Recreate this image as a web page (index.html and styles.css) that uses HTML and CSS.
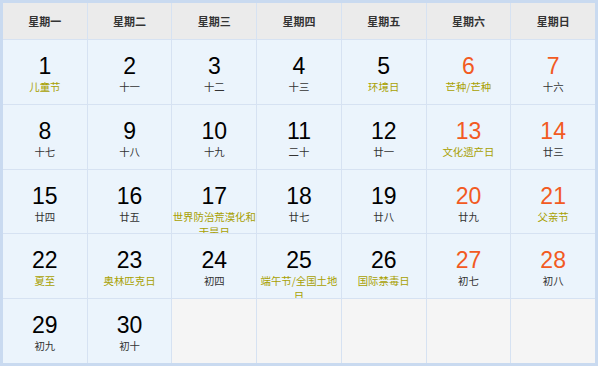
FILE: index.html
```html
<!DOCTYPE html>
<html lang="zh">
<head>
<meta charset="utf-8">
<link rel="stylesheet" href="styles.css">
</head>
<body>
<div class="cal">
  <div class="hd">星期一</div><div class="hd">星期二</div><div class="hd">星期三</div><div class="hd">星期四</div><div class="hd">星期五</div><div class="hd">星期六</div><div class="hd">星期日</div>

  <div class="day"><div class="n">1</div><div class="l fest">儿童节</div></div>
  <div class="day"><div class="n">2</div><div class="l">十一</div></div>
  <div class="day"><div class="n">3</div><div class="l">十二</div></div>
  <div class="day"><div class="n">4</div><div class="l">十三</div></div>
  <div class="day"><div class="n">5</div><div class="l fest">环境日</div></div>
  <div class="day wk"><div class="n">6</div><div class="l fest">芒种/芒种</div></div>
  <div class="day wk"><div class="n">7</div><div class="l">十六</div></div>

  <div class="day"><div class="n">8</div><div class="l">十七</div></div>
  <div class="day"><div class="n">9</div><div class="l">十八</div></div>
  <div class="day"><div class="n">10</div><div class="l">十九</div></div>
  <div class="day"><div class="n">11</div><div class="l">二十</div></div>
  <div class="day"><div class="n">12</div><div class="l">廿一</div></div>
  <div class="day wk"><div class="n">13</div><div class="l fest">文化遗产日</div></div>
  <div class="day wk"><div class="n">14</div><div class="l">廿三</div></div>

  <div class="day"><div class="n">15</div><div class="l">廿四</div></div>
  <div class="day"><div class="n">16</div><div class="l">廿五</div></div>
  <div class="day"><div class="n">17</div><div class="l fest">世界防治荒漠化和干旱日</div></div>
  <div class="day"><div class="n">18</div><div class="l">廿七</div></div>
  <div class="day"><div class="n">19</div><div class="l">廿八</div></div>
  <div class="day wk"><div class="n">20</div><div class="l">廿九</div></div>
  <div class="day wk"><div class="n">21</div><div class="l fest">父亲节</div></div>

  <div class="day"><div class="n">22</div><div class="l fest">夏至</div></div>
  <div class="day"><div class="n">23</div><div class="l fest">奥林匹克日</div></div>
  <div class="day"><div class="n">24</div><div class="l">初四</div></div>
  <div class="day"><div class="n">25</div><div class="l fest">端午节/全国土地日</div></div>
  <div class="day"><div class="n">26</div><div class="l fest">国际禁毒日</div></div>
  <div class="day wk"><div class="n">27</div><div class="l">初七</div></div>
  <div class="day wk"><div class="n">28</div><div class="l">初八</div></div>

  <div class="day"><div class="n">29</div><div class="l">初九</div></div>
  <div class="day"><div class="n">30</div><div class="l">初十</div></div>
  <div class="day empty"></div>
  <div class="day empty"></div>
  <div class="day empty"></div>
  <div class="day empty"></div>
  <div class="day empty"></div>
</div>
</body>
</html>
```
FILE: styles.css
```css
html, body {
  margin: 0;
  padding: 0;
  background: #ffffff;
}
.cal {
  box-sizing: border-box;
  width: 598px;
  height: 366px;
  border: 3px solid #c9daf0;
  background: #d6e2f2;
  display: grid;
  grid-template-columns: repeat(7, 1fr);
  grid-template-rows: 36px repeat(5, 1fr);
  gap: 1px;
  font-family: "Noto Sans CJK SC", "Noto Sans", sans-serif;
}
.hd {
  background: #ebebeb;
  color: #333333;
  font-size: 11px;
  font-weight: bold;
  display: flex;
  align-items: center;
  justify-content: center;
}
.day {
  background: #ebf4fc;
  overflow: hidden;
  text-align: center;
  padding-top: 13px;
  box-sizing: border-box;
}
.day.empty {
  background: #f5f5f5;
}
.n {
  font-family: "Liberation Sans", Arial, sans-serif;
  font-size: 23px;
  line-height: 26px;
  color: #000000;
}
.wk .n {
  color: #f25a22;
}
.l {
  font-size: 10.4px;
  line-height: 15px;
  color: #333333;
}
.l.fest {
  color: #a8a000;
}
```
